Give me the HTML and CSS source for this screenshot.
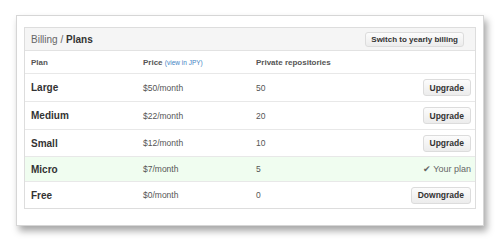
FILE: index.html
```html
<!DOCTYPE html>
<html lang="en">
<head>
    <meta charset="UTF-8">
    <title>Billing / Plans</title>
    <link rel="stylesheet" href="styles.css">
</head>
<body>
    <div class="card">
        <div class="plans">
            <div class="plans-header">
                <h3><span class="crumb">Billing</span> / <strong>Plans</strong></h3>
                <button class="btn btn-switch">Switch to yearly billing</button>
            </div>
            <table class="plans-table">
                <thead>
                    <tr>
                        <th class="col-plan">Plan</th>
                        <th class="col-price">Price <a href="#" class="currency">(view in JPY)</a></th>
                        <th>Private repositories</th>
                        <th></th>
                    </tr>
                </thead>
                <tbody>
                    <tr class="tall">
                        <td class="name">Large</td>
                        <td>$50/month</td>
                        <td>50</td>
                        <td class="action"><button class="btn">Upgrade</button></td>
                    </tr>
                    <tr class="tall">
                        <td class="name">Medium</td>
                        <td>$22/month</td>
                        <td>20</td>
                        <td class="action"><button class="btn">Upgrade</button></td>
                    </tr>
                    <tr class="mid">
                        <td class="name">Small</td>
                        <td>$12/month</td>
                        <td>10</td>
                        <td class="action"><button class="btn">Upgrade</button></td>
                    </tr>
                    <tr class="current">
                        <td class="name">Micro</td>
                        <td>$7/month</td>
                        <td>5</td>
                        <td class="action"><span class="your-plan">&#10004; Your plan</span></td>
                    </tr>
                    <tr class="mid">
                        <td class="name">Free</td>
                        <td>$0/month</td>
                        <td>0</td>
                        <td class="action"><button class="btn">Downgrade</button></td>
                    </tr>
                </tbody>
            </table>
        </div>
    </div>
</body>
</html>
```

FILE: styles.css
```css
body {
    margin: 0;
    padding: 15px 16px;
    background-color: #fff;
    font-family: 'Liberation Sans', Arial, sans-serif;
    color: #333;
}
.card {
    width: 452px;
    padding: 11px 7px 16px;
    background-color: #fff;
    border: 1px solid #d6d6d6;
    box-shadow: 3px 5px 7px rgba(0, 0, 0, 0.35);
}
.plans {
    border: 1px solid #ddd;
}
.plans-header {
    display: flex;
    justify-content: space-between;
    align-items: center;
    height: 22px;
    padding: 0 11px 0 6px;
    background-color: #f5f5f5;
    border-bottom: 1px solid #e2e2e2;
}
.plans-header h3 {
    margin: 0;
    font-size: 10px;
    font-weight: normal;
    color: #666;
}
.plans-header h3 strong {
    color: #333;
}
.btn {
    font-family: 'Liberation Sans', Arial, sans-serif;
    font-size: 8.5px;
    font-weight: bold;
    color: #333;
    height: 17px;
    padding: 0 6px;
    background: linear-gradient(#fcfcfc, #ececec);
    border: 1px solid #dcdcdc;
    border-radius: 3px;
    cursor: pointer;
}
.btn-switch {
    height: 15px;
    padding: 0 5px;
    font-size: 8px;
}
.plans-table {
    width: 100%;
    border-collapse: collapse;
    font-size: 8.5px;
}
.plans-table th {
    height: 22px;
    padding: 0 6px;
    text-align: left;
    font-size: 8px;
    color: #555;
}
.plans-table .col-plan {
    width: 100px;
}
.plans-table .col-price {
    width: 101px;
}
.currency {
    font-size: 6.5px;
    font-weight: normal;
    color: #4183c4;
    text-decoration: none;
}
.plans-table td {
    padding: 0 6px;
    border-top: 1px solid #e8e8e8;
    color: #555;
}
.plans-table td.name {
    font-size: 10px;
    font-weight: bold;
    color: #333;
}
.plans-table tr.tall td {
    height: 27px;
}
.plans-table tr.mid td {
    height: 26px;
}
.plans-table tr.current td {
    height: 24px;
    background-color: #f0fdf0;
}
.plans-table td.action {
    text-align: right;
    padding-right: 4px;
}
.your-plan {
    font-size: 9px;
    color: #666;
}
```
